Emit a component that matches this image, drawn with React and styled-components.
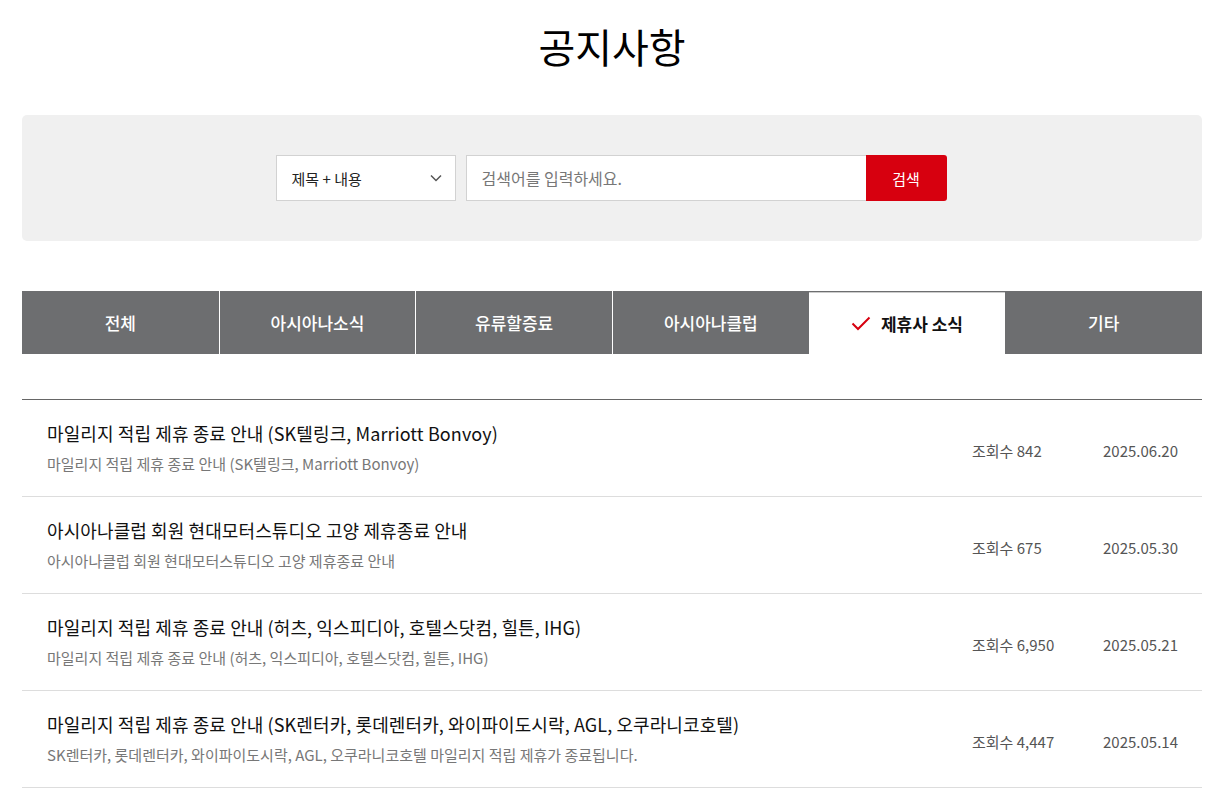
import styled, { createGlobalStyle } from "styled-components";

const GlobalStyle = createGlobalStyle`
  body {
    margin: 0;
    background: #fff;
    font-family: "Noto Sans CJK KR", "Noto Sans", sans-serif;
    color: #111;
  }
  * { box-sizing: border-box; }
`;

const Page = styled.div`
  width: 1225px;
  padding: 0 23px 0 22px;
`;

const Title = styled.h1`
  margin: 0;
  padding-top: 17px;
  height: 115px;
  text-align: center;
  font-size: 40px;
  font-weight: 400;
  line-height: 58px;
  color: #000;
`;

const SearchBox = styled.div`
  height: 126px;
  background: #f0f0f0;
  border-radius: 5px;
  display: flex;
  align-items: center;
  justify-content: center;
  gap: 10px;
  padding-right: 2px;
`;

const Select = styled.div`
  width: 180px;
  height: 46px;
  background: #fff;
  border: 1px solid #d2d2d2;
  display: flex;
  align-items: center;
  justify-content: space-between;
  padding: 0 12px 0 15px;
  font-size: 15px;
  color: #222;
`;

const InputWrap = styled.div`
  display: flex;
`;

const Input = styled.input`
  width: 400px;
  height: 46px;
  border: 1px solid #d2d2d2;
  border-right: none;
  padding: 0 15px;
  font-family: inherit;
  font-size: 16px;
  outline: none;
  &::placeholder { color: #777; }
`;

const Button = styled.button`
  width: 81px;
  height: 46px;
  border: none;
  background: #d7000f;
  color: #fff;
  font-family: inherit;
  font-size: 15px;
  border-radius: 0 3px 3px 0;
`;

const Tabs = styled.div`
  margin-top: 50px;
  display: grid;
  grid-template-columns: repeat(6, 1fr);
  height: 63px;
  background: #6d6e70;
`;

const Tab = styled.div`
  display: flex;
  align-items: center;
  justify-content: center;
  gap: 10px;
  font-size: 17px;
  font-weight: ${(p) => (p.$active ? 700 : 500)};
  color: ${(p) => (p.$active ? "#111" : "#fff")};
  background: ${(p) => (p.$active ? "#fff" : "transparent")};
  border-left: ${(p) => (p.$first || p.$active || p.$afterActive ? "none" : "1px solid #fff")};
  ${(p) => p.$active && "margin-top: 1px; border-top: 1px solid #ccc;"}
`;

const List = styled.ul`
  list-style: none;
  margin: 45px 0 0;
  padding: 0;
  border-top: 1px solid #666;
`;

const Row = styled.li`
  height: 97px;
  border-bottom: 1px solid #ddd;
  display: flex;
  align-items: center;
  padding: 0 24px 0 25px;
`;

const RowText = styled.div`
  flex: 1;
  min-width: 0;
  margin-top: -3px;
`;

const RowTitle = styled.div`
  font-size: 18px;
  line-height: 26px;
  letter-spacing: 0.1px;
  color: #111;
`;

const RowDesc = styled.div`
  margin-top: 8px;
  font-size: 15px;
  line-height: 20px;
  color: #777;
`;

const Meta = styled.div`
  font-size: 15px;
  color: #555;
  width: ${(p) => p.$w}px;
  text-align: ${(p) => p.$align || "left"};
  padding-top: 4px;
`;

const tabs = ["전체", "아시아나소식", "유류할증료", "아시아나클럽", "제휴사 소식", "기타"];
const active = 4;

const rows = [
  {
    title: "마일리지 적립 제휴 종료 안내 (SK텔링크, Marriott Bonvoy)",
    desc: "마일리지 적립 제휴 종료 안내 (SK텔링크, Marriott Bonvoy)",
    views: "842",
    date: "2025.06.20",
  },
  {
    title: "아시아나클럽 회원 현대모터스튜디오 고양 제휴종료 안내",
    desc: "아시아나클럽 회원 현대모터스튜디오 고양 제휴종료 안내",
    views: "675",
    date: "2025.05.30",
  },
  {
    title: "마일리지 적립 제휴 종료 안내 (허츠, 익스피디아, 호텔스닷컴, 힐튼, IHG)",
    desc: "마일리지 적립 제휴 종료 안내 (허츠, 익스피디아, 호텔스닷컴, 힐튼, IHG)",
    views: "6,950",
    date: "2025.05.21",
  },
  {
    title: "마일리지 적립 제휴 종료 안내 (SK렌터카, 롯데렌터카, 와이파이도시락, AGL, 오쿠라니코호텔)",
    desc: "SK렌터카, 롯데렌터카, 와이파이도시락, AGL, 오쿠라니코호텔 마일리지 적립 제휴가 종료됩니다.",
    views: "4,447",
    date: "2025.05.14",
  },
];

const Chevron = () => (
  <svg width="14" height="14" viewBox="0 0 14 14" fill="none">
    <path d="M2 4.5 L7 9.5 L12 4.5" stroke="#555" strokeWidth="1.5" />
  </svg>
);

const Check = () => (
  <svg width="20" height="16" viewBox="0 0 20 16" fill="none">
    <path d="M1.5 7.5 L7 13 L18.5 1.5" stroke="#d7000f" strokeWidth="2" />
  </svg>
);

export default function App() {
  return (
    <>
      <GlobalStyle />
      <Page>
        <Title>공지사항</Title>
        <SearchBox>
          <Select>
            <span>제목 + 내용</span>
            <Chevron />
          </Select>
          <InputWrap>
            <Input placeholder="검색어를 입력하세요." />
            <Button>검색</Button>
          </InputWrap>
        </SearchBox>
        <Tabs>
          {tabs.map((t, i) => (
            <Tab
              key={t}
              $first={i === 0}
              $active={i === active}
              $afterActive={i === active + 1}
            >
              {i === active && <Check />}
              {t}
            </Tab>
          ))}
        </Tabs>
        <List>
          {rows.map((r) => (
            <Row key={r.date}>
              <RowText>
                <RowTitle>{r.title}</RowTitle>
                <RowDesc>{r.desc}</RowDesc>
              </RowText>
              <Meta $w={130}>조회수 {r.views}</Meta>
              <Meta $w={76} $align="right">{r.date}</Meta>
            </Row>
          ))}
        </List>
      </Page>
    </>
  );
}
